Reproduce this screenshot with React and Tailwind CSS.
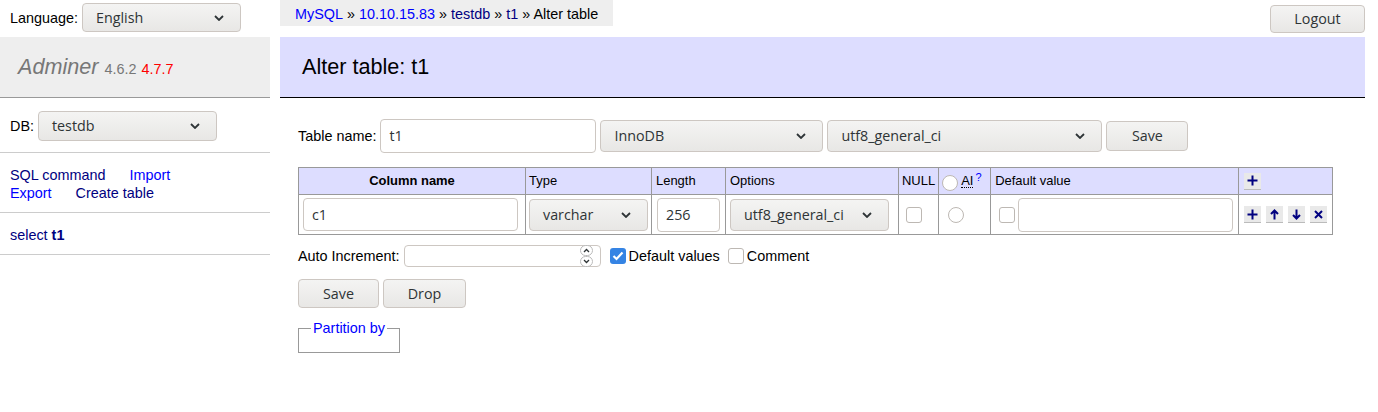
import React from 'react';

const ctl = "font-['Open_Sans',sans-serif] text-[14.3px] text-[#2e3436]";

const Chevron = () => (
  <svg width="10" height="6" viewBox="0 0 10 6" className="shrink-0">
    <path d="M1 1l4 4 4-4" fill="none" stroke="#2e3436" strokeWidth="1.8" />
  </svg>
);

const Select = ({ value, className = '' }) => (
  <div className={`flex items-center justify-between rounded-[4px] border border-[#cdc7c2] bg-gradient-to-b from-[#f4f4f3] to-[#e8e7e5] pl-[13px] pr-[16px] ${ctl} ${className}`}>
    <span>{value}</span>
    <Chevron />
  </div>
);

const Button = ({ children, className = '' }) => (
  <div className={`flex items-center justify-center rounded-[4px] border border-[#cdc7c2] bg-gradient-to-b from-[#f4f4f3] to-[#e8e7e5] ${ctl} ${className}`}>
    {children}
  </div>
);

const Input = ({ value, className = '' }) => (
  <div className={`flex items-center rounded-[4px] border border-[#cdc7c2] bg-white px-[8px] ${ctl} ${className}`}>
    {value}
  </div>
);

const Check = ({ checked }) =>
  checked ? (
    <span className="flex h-[16px] w-[16px] items-center justify-center rounded-[3px] bg-[#3584e4]">
      <svg width="12" height="10" viewBox="0 0 12 10">
        <path d="M1.5 5l3 3 6-6.5" fill="none" stroke="white" strokeWidth="2.2" />
      </svg>
    </span>
  ) : (
    <span className="block h-[16px] w-[16px] rounded-[3px] border border-[#bdb8b3] bg-white" />
  );

const Radio = () => <span className="block h-[16px] w-[16px] rounded-full border border-[#bdb8b3] bg-white" />;

const Icon = ({ d }) => (
  <span className="flex h-[17px] w-[17px] items-center justify-center border-b border-[#bbb] bg-[#e9e9e9]">
    <svg width="11" height="11" viewBox="0 0 11 11">
      <path d={d} fill="none" stroke="#000080" strokeWidth="2" />
    </svg>
  </span>
);

const plus = 'M5.5 0.5v10M0.5 5.5h10';
const up = 'M5.5 10.5v-9M2 5l3.5-3.5L9 5';
const down = 'M5.5 0.5v9M2 6l3.5 3.5L9 6';
const cross = 'M2 2l7 7M9 2l-7 7';

export default function App() {
  return (
    <div className="flex h-[412px] w-[1378px] bg-white font-['Liberation_Sans',Arial,sans-serif] text-[14.4px] leading-[18px] text-black">
      {/* sidebar */}
      <div className="w-[270px] shrink-0">
        <div className="flex h-[37px] items-start gap-[4px] pl-[10px] pt-[3px]">
          <span className="mt-[6px]">Language:</span>
          <Select value="English" className="h-[29px] w-[159px]" />
        </div>
        <div className="flex h-[61px] items-center border-b border-[#999] bg-[#eee] pl-[18px]">
          <span className="text-[21.6px] italic text-[#777]">Adminer</span>
          <span className="ml-[6px] mt-[3px] text-[14.4px] text-[#777]">4.6.2</span>
          <span className="ml-[5px] mt-[3px] text-[14.4px] text-[#f00]">4.7.7</span>
        </div>
        <div className="flex h-[55px] items-center gap-[4px] border-b border-[#ccc] pl-[10px] pt-[1px]">
          <span>DB:</span>
          <Select value="testdb" className="h-[30px] w-[179px]" />
        </div>
        <div className="h-[60px] border-b border-[#ccc] pl-[10px] pt-[13px]">
          <div className="flex">
            <span className="text-[#000080]">SQL command</span>
            <span className="ml-[24px] text-[#00f]">Import</span>
          </div>
          <div className="flex">
            <span className="text-[#00f]">Export</span>
            <span className="ml-[24px] text-[#000080]">Create table</span>
          </div>
        </div>
        <div className="h-[42px] border-b border-[#ccc] pl-[10px] pt-[13px] text-[#000080]">
          select <b>t1</b>
        </div>
      </div>

      {/* main */}
      <div className="ml-[10px] w-[1085px] shrink-0">
        <div className="flex h-[37px] items-start justify-between">
          <div className="flex h-[26px] items-center bg-[#eee] px-[15px] pt-[1px]">
            <span className="text-[#00f]">MySQL</span>&nbsp;»&nbsp;
            <span className="text-[#00f]">10.10.15.83</span>&nbsp;»&nbsp;
            <span className="text-[#000080]">testdb</span>&nbsp;»&nbsp;
            <span className="text-[#000080]">t1</span>&nbsp;» Alter table
          </div>
          <Button className="mt-[5px] h-[28px] w-[95px]">Logout</Button>
        </div>
        <div className="flex h-[61px] items-center border-b border-black bg-[#ddf] pl-[22px]">
          <span className="text-[21.6px]">Alter table: t1</span>
        </div>

        <div className="pl-[18px]">
          <div className="mt-[21px] flex items-center">
            <span className="mr-[4px]">Table name:</span>
            <Input value="t1" className="h-[34px] w-[216px]" />
            <Select value="InnoDB" className="ml-[4px] h-[32px] w-[223px]" />
            <Select value="utf8_general_ci" className="ml-[4px] h-[32px] w-[275px]" />
            <Button className="ml-[4px] h-[30px] w-[82px]">Save</Button>
          </div>

          <table className="mt-[14px] border-collapse text-[12.96px] leading-[16px]">
            <thead>
              <tr className="h-[27px] bg-[#ddf]">
                <th className="w-[227px] border border-[#999] text-center font-bold">Column name</th>
                <td className="w-[126px] border border-[#999] px-[3px]">Type</td>
                <td className="w-[73px] border border-[#999] px-[4px]">Length</td>
                <td className="w-[173px] border border-[#999] px-[4px]">Options</td>
                <td className="w-[38px] border border-[#999] px-[3px]">NULL</td>
                <td className="w-[52px] border border-[#999] px-[3px]">
                  <div className="flex items-center gap-[3px]">
                    <span className="mt-[4px]"><Radio /></span>
                    <span className="border-b border-dotted border-black leading-[13px]">AI</span>
                    <span className="-ml-[1px] -mt-[8px] text-[11px] text-[#00f]">?</span>
                  </div>
                </td>
                <td className="w-[248px] border border-[#999] px-[4px]">Default value</td>
                <td className="w-[93px] border border-[#999] px-[5px]">
                  <Icon d={plus} />
                </td>
              </tr>
            </thead>
            <tbody>
              <tr className="h-[40px]">
                <td className="border border-[#999] px-[4px]">
                  <Input value="c1" className="h-[33px] w-[215px]" />
                </td>
                <td className="border border-[#999] px-[3px]">
                  <Select value="varchar" className="h-[32px] w-[119px]" />
                </td>
                <td className="border border-[#999] px-[5px]">
                  <Input value="256" className="h-[34px] w-[63px]" />
                </td>
                <td className="border border-[#999] px-[4px]">
                  <Select value="utf8_general_ci" className="h-[32px] w-[159px]" />
                </td>
                <td className="border border-[#999] px-[7px]">
                  <Check />
                </td>
                <td className="border border-[#999] px-[9px]">
                  <Radio />
                </td>
                <td className="border border-[#999] pl-[8px] pr-[4px]">
                  <div className="flex items-center gap-[3px]">
                    <Check />
                    <Input value="" className="h-[34px] w-[215px]" />
                  </div>
                </td>
                <td className="border border-[#999] px-[5px]">
                  <div className="flex gap-[5px]">
                    <Icon d={plus} />
                    <Icon d={up} />
                    <Icon d={down} />
                    <Icon d={cross} />
                  </div>
                </td>
              </tr>
            </tbody>
          </table>

          <div className="mt-[10px] flex items-center">
            <span className="mr-[4px]">Auto Increment:</span>
            <div className="flex h-[22px] w-[197px] items-center justify-end rounded-[4px] border border-[#cdc7c2] bg-white pr-[7px]">
              <div className="flex flex-col">
                <span className="flex h-[11px] w-[13px] items-center justify-center rounded-full border border-[#bbb] bg-white">
                  <svg width="7" height="5" viewBox="0 0 7 5"><path d="M1 4l2.5-2.5L6 4" fill="none" stroke="#2e3436" strokeWidth="1.3" /></svg>
                </span>
                <span className="flex h-[11px] w-[13px] items-center justify-center rounded-full border border-[#bbb] bg-white">
                  <svg width="7" height="5" viewBox="0 0 7 5"><path d="M1 1l2.5 2.5L6 1" fill="none" stroke="#2e3436" strokeWidth="1.3" /></svg>
                </span>
              </div>
            </div>
            <span className="ml-[9px] mr-[3px]"><Check checked /></span>
            <span>Default values</span>
            <span className="ml-[8px] mr-[3px]"><Check /></span>
            <span>Comment</span>
          </div>

          <div className="mt-[12px] flex gap-[4px]">
            <Button className="h-[29px] w-[81px]">Save</Button>
            <Button className="h-[29px] w-[83px]">Drop</Button>
          </div>

          <fieldset className="mt-[11px] h-[34px] w-[100px] border border-[#999] px-[12px]">
            <legend className="whitespace-nowrap px-[2px] text-[#00f]">Partition by</legend>
          </fieldset>
        </div>
      </div>
    </div>
  );
}
